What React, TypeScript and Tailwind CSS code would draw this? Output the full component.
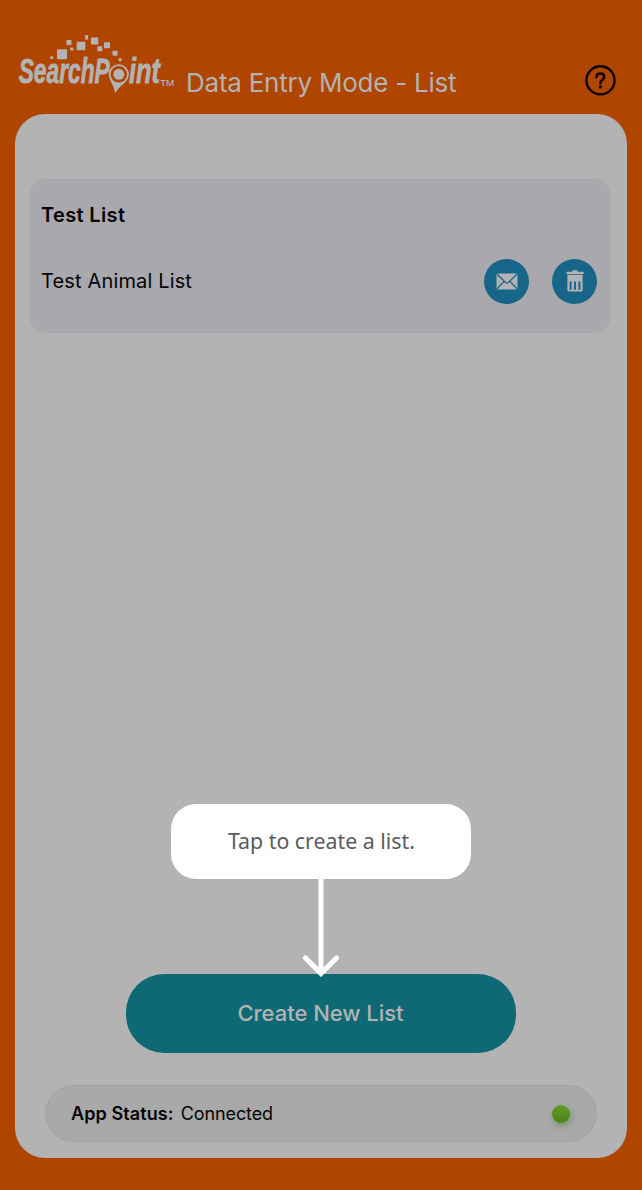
const squares: [number, number, number, number][] = [
  [51.7, 57.7, 2.8, 2.8],
  [62, 54.3, 10, 10],
  [69, 42.5, 5, 5],
  [71.8, 49, 3, 3],
  [81, 46, 8.6, 8.6],
  [86.6, 37.4, 3, 4.6],
  [94.6, 41, 7.2, 7.2],
  [99.8, 48.8, 5, 5],
  [107, 45.3, 6, 6],
  [115, 53.2, 5, 5],
  [120.1, 59.8, 3, 3],
];

function Logo() {
  return (
    <svg
      width="160"
      height="66"
      viewBox="16 32 160 66"
      fill="#b3b3b3"
      className="shrink-0"
      fontFamily="'Liberation Sans Narrow', 'Liberation Sans', sans-serif"
      aria-label="SearchPoint"
    >
      {squares.map(([x, y, w, h]) => (
        <rect key={x} x={x - w / 2} y={y - h / 2} width={w} height={h} rx="0.7" />
      ))}
      <g fontWeight="700" fontStyle="italic" fontSize="34.5" stroke="#b3b3b3" strokeWidth="0.8">
        <text x="18.7" y="83.3" textLength="91" lengthAdjust="spacingAndGlyphs">
          SearchP
        </text>
        <text x="129" y="83.3" textLength="31" lengthAdjust="spacingAndGlyphs">
          int
        </text>
      </g>
      <path d="M109.8 79C111.5 83.5 113.8 86 115.4 93.5C117.8 88 121.5 86 125.5 82L118.8 82.8Z" />
      <circle cx="118.8" cy="74.3" r="9.2" fill="#b04500" stroke="#b3b3b3" strokeWidth="1.8" />
      <circle cx="118.8" cy="74.3" r="5.5" />
      <text x="160.5" y="85.8" fontFamily="'Open Sans', sans-serif" fontSize="9" fontWeight="600" textLength="14" lengthAdjust="spacingAndGlyphs">
        TM
      </text>
    </svg>
  );
}

function HelpIcon() {
  return (
    <svg width="32" height="32" viewBox="0 0 32 32" fill="none" stroke="#080300" className="shrink-0">
      <circle cx="16.5" cy="16.3" r="14.1" strokeWidth="2.4" />
      <g transform="translate(0.4 0.3)">
        <path d="M12.1 12.6C12.1 10.3 13.7 9.1 15.9 9.1C18.2 9.1 19.8 10.4 19.8 12.4C19.8 14.1 18.9 14.9 17.7 15.8C16.5 16.7 16 17.3 16 18.9" strokeWidth="2.5" strokeLinecap="round" />
        <circle cx="16" cy="22.6" r="1.6" fill="#080300" stroke="none" />
      </g>
    </svg>
  );
}

function MailIcon() {
  return (
    <svg width="22" height="17" viewBox="0 0 22 17">
      <rect x="0.5" y="0.5" width="21" height="16" rx="1" fill="#b1b3b5" />
      <path d="M0.8 1L9.4 9.2Q11 10.7 12.6 9.2L21.2 1M0.8 16L8 8.4M21.2 16L14 8.4" fill="none" stroke="#176588" strokeWidth="1.2" />
    </svg>
  );
}

function TrashIcon() {
  return (
    <svg width="18" height="22" viewBox="0 0 18 22" fill="#b1b3b5">
      <path d="M6.3 1.2Q6.3 0.3 7.2 0.3H10.8Q11.7 0.3 11.7 1.2V1.8H17Q17.7 1.8 17.7 2.5V3.9H0.3V2.5Q0.3 1.8 1 1.8H6.3Z" />
      <path d="M1.4 4.8H16.6V20Q16.6 21.6 15 21.6H3Q1.4 21.6 1.4 20Z" />
      <path d="M4.6 11.6V19.8M9 11.6V19.8M13.4 11.6V19.8" stroke="#176588" strokeWidth="2" />
    </svg>
  );
}

export default function App() {
  return (
    <div className="flex h-[1190px] w-[642px] flex-col bg-[#b04500] px-[15px] font-['Inter',sans-serif] text-[#050505]">
      <header className="flex h-[114px] shrink-0 items-start pt-8 pl-px">
        <Logo />
        <h1 className="mt-[33px] ml-[10px] text-[26px] leading-9 font-normal tracking-[-0.24px] whitespace-nowrap text-[#b3b3b3]">
          Data Entry Mode - List
        </h1>
        <button className="mt-8 mr-[11px] ml-auto" aria-label="Help">
          <HelpIcon />
        </button>
      </header>

      <main className="flex h-[1044px] w-[612px] shrink-0 flex-col rounded-[30px] bg-[#b3b3b3] pt-[65px]">
        <section className="ml-[15px] h-[154px] w-[580px] shrink-0 rounded-[15px] bg-[#a9a8ad] pt-[21px] pr-[13px] pl-[11px]">
          <h2 className="text-[20px] leading-[30px] font-semibold tracking-[0.35px]">Test List</h2>
          <div className="mt-7 flex h-[46px] items-center">
            <span className="text-[20px] leading-[30px] tracking-[0.15px]">Test Animal List</span>
            <button className="ml-auto flex size-[45px] items-center justify-center rounded-full bg-[#176588]" aria-label="Email list">
              <MailIcon />
            </button>
            <button className="ml-[23px] flex size-[45px] items-center justify-center rounded-full bg-[#176588]" aria-label="Delete list">
              <TrashIcon />
            </button>
          </div>
        </section>

        <div className="mt-auto flex shrink-0 flex-col items-center">
          <div className="flex h-[75px] w-[300px] items-center justify-center rounded-[25px] bg-white pb-[2px] font-['Noto_Sans',sans-serif] text-[22px] text-[#5b5c5c]">
            <span className="origin-center scale-x-[0.97] whitespace-nowrap">Tap to create a list.</span>
          </div>
          <svg width="40" height="98" viewBox="0 0 40 98" fill="none" stroke="white" strokeWidth="5" className="relative z-10 -mb-[3px]">
            <path d="M20 0V94" />
            <path d="M4.5 79L20 94.5L35.5 79" strokeLinecap="round" />
          </svg>
          <button className="h-[79px] w-[390px] rounded-[38px] bg-[#0f6975] pr-px text-[22px] font-medium tracking-[-0.03px] text-[#b3b3b3]">
            Create New List
          </button>
        </div>

        <footer className="mx-auto mt-8 mb-4 flex h-[57px] w-[552px] shrink-0 items-center rounded-full border border-[#a3a3a3] bg-[#a9a9a9] px-[25px] text-[18px]">
          <span className="font-semibold tracking-[0.1px]">App Status:</span>
          <span className="ml-[7px] tracking-[-0.1px]">Connected</span>
          <span className="mt-px mr-px ml-auto size-[18px] rounded-full bg-linear-to-b from-[#60a01f] to-[#4b8018] shadow-[1px_3px_6px_#71906a]" />
        </footer>
      </main>
    </div>
  );
}
